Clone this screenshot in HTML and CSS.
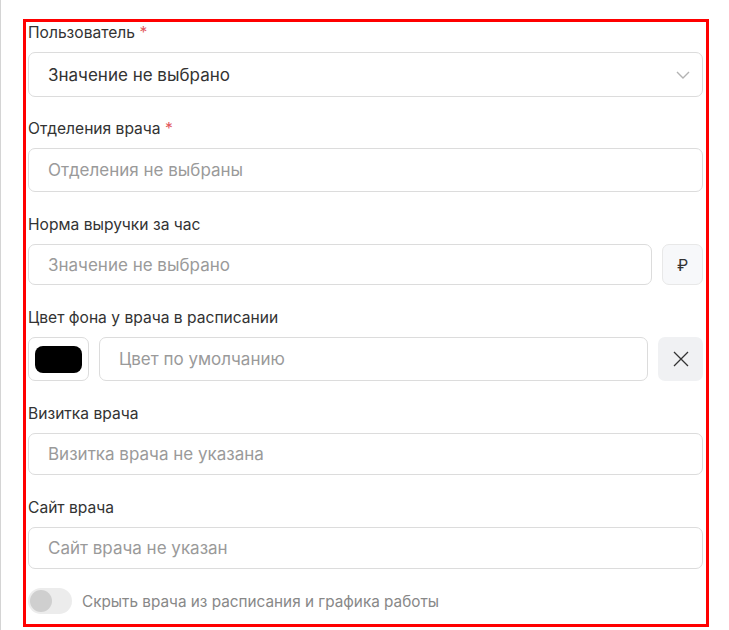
FILE: index.html
```html
<!DOCTYPE html>
<html lang="ru">

<head>
    <meta charset="utf-8">
    <title>Врач</title>
    <link rel="stylesheet" href="styles.css">
</head>

<body>
    <div class="page">
        <form class="doctor-form">
            <div class="field">
                <label class="label">Пользователь <span class="req">*</span></label>
                <div class="select">
                    <span class="value">Значение не выбрано</span>
                    <svg class="chevron" width="14" height="8" viewBox="0 0 14 8">
                        <path d="M1 1l6 6 6-6" fill="none" stroke="#b3b3b3" stroke-width="1.4" />
                    </svg>
                </div>
            </div>

            <div class="field">
                <label class="label">Отделения врача <span class="req">*</span></label>
                <div class="input h44"><span class="placeholder">Отделения не выбраны</span></div>
            </div>

            <div class="field">
                <label class="label">Норма выручки за час</label>
                <div class="row">
                    <div class="input h41 grow"><span class="placeholder">Значение не выбрано</span></div>
                    <div class="addon">₽</div>
                </div>
            </div>

            <div class="field">
                <label class="label">Цвет фона у врача в расписании</label>
                <div class="row">
                    <div class="swatch"><span class="swatch-color"></span></div>
                    <div class="input h44 grow"><span class="placeholder">Цвет по умолчанию</span></div>
                    <button type="button" class="clear-btn">
                        <svg width="16" height="16" viewBox="0 0 16 16">
                            <path d="M1 1l14 14M15 1L1 15" stroke="#333" stroke-width="1.3" />
                        </svg>
                    </button>
                </div>
            </div>

            <div class="field">
                <label class="label">Визитка врача</label>
                <div class="input h42"><span class="placeholder">Визитка врача не указана</span></div>
            </div>

            <div class="field last">
                <label class="label">Сайт врача</label>
                <div class="input h42"><span class="placeholder">Сайт врача не указан</span></div>
            </div>

            <div class="switch-row">
                <span class="switch"><span class="knob"></span></span>
                <span class="switch-text">Скрыть врача из расписания и графика работы</span>
            </div>
        </form>
    </div>
</body>

</html>
```

FILE: styles.css
```css
body {
    margin: 0;
    font-family: Inter, "Noto Sans", sans-serif;
    color: #333;
    background: #fff;
}

.page {
    min-height: 630px;
    border-left: 1px solid #d4d4d4;
    padding: 19px 0 0 22px;
    box-sizing: border-box;
}

.doctor-form {
    width: 686px;
    box-sizing: border-box;
    border: 3px solid #f00;
    padding: 1px 3px 10px 2px;
}

.field {
    margin-bottom: 23px;
}

.field:first-child,
.field.last {
    margin-bottom: 22px;
}

.label {
    display: block;
    font-size: 15.6px;
    line-height: 20px;
    margin-bottom: 9px;
    color: #333;
}

.req {
    color: #e2555b;
}

.select,
.input {
    display: flex;
    align-items: center;
    box-sizing: border-box;
    border: 1px solid #dcdcdc;
    border-radius: 7px;
    padding: 0 19px;
    font-size: 17px;
}

.select {
    height: 45px;
    justify-content: space-between;
    padding-right: 12px;
}

.h44 { height: 44px; }
.h42 { height: 42px; }
.h41 { height: 41px; }

.value {
    color: #333;
}

.placeholder {
    color: #9a9a9a;
}

.row {
    display: flex;
    gap: 10px;
}

.grow {
    flex: 1;
}

.addon {
    width: 41px;
    height: 41px;
    box-sizing: border-box;
    border: 1px solid #e8e8e8;
    border-radius: 7px;
    background: #f7f8fa;
    display: flex;
    align-items: center;
    justify-content: center;
    font-size: 16px;
    color: #333;
}

.swatch {
    width: 61px;
    height: 44px;
    box-sizing: border-box;
    border: 1px solid #dcdcdc;
    border-radius: 7px;
    display: flex;
    align-items: center;
    justify-content: center;
}

.swatch-color {
    width: 47px;
    height: 27px;
    border-radius: 8px;
    background: #000;
}

.clear-btn {
    width: 45px;
    height: 44px;
    border: none;
    border-radius: 7px;
    background: #f0f1f3;
    display: flex;
    align-items: center;
    justify-content: center;
    padding: 0;
}

.switch-row {
    display: flex;
    align-items: center;
    gap: 10px;
    margin-top: -3px;
}

.switch {
    width: 44px;
    height: 26px;
    border-radius: 13px;
    background: #ececec;
    display: flex;
    align-items: center;
    padding-left: 2px;
    box-sizing: border-box;
}

.knob {
    width: 22px;
    height: 22px;
    border-radius: 50%;
    background: #cfcfcf;
}

.switch-text {
    font-size: 15.3px;
    color: #888;
}
```
